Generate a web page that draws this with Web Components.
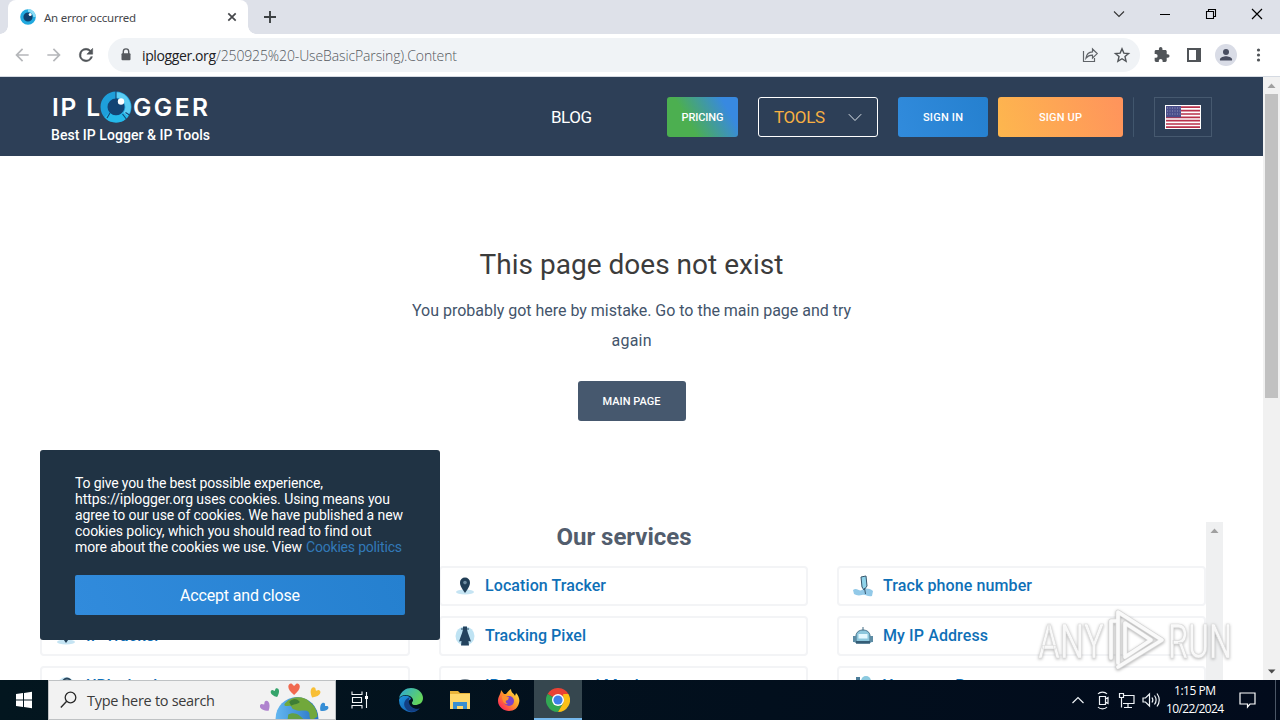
<!DOCTYPE html>
<html lang="en">
<head>
<meta charset="utf-8">
<title>An error occurred</title>
<style>
html,body{margin:0;padding:0;overflow:hidden}
body{width:1280px;height:720px;font-family:Roboto,sans-serif}
</style>
</head>
<body>
<desktop-screen></desktop-screen>

<template id="t-desktop-screen">
<style>
:host{display:flex;flex-direction:column;width:1280px;height:720px;overflow:hidden;position:relative}
.view{display:flex;flex:1;min-height:0;position:relative;background:#fff}
.page{flex:1;display:flex;flex-direction:column;overflow:hidden;background:#fff}
cookie-banner{position:absolute;left:40px;top:373px}
water-mark{position:absolute;left:1034px;top:527px}
</style>
<tab-strip></tab-strip>
<tool-bar></tool-bar>
<div class="view">
  <div class="page"><site-header></site-header><error-message></error-message><services-panel></services-panel></div>
  <scroll-bar style="--thumb:304px;--bg:#f1f1f1" class="main" down></scroll-bar>
  <cookie-banner></cookie-banner>
  <water-mark></water-mark>
</div>
<task-bar></task-bar>
</template>

<template id="t-tab-strip">
<style>
:host{display:flex;height:34px;background:#dee1e9;padding-left:8px;box-sizing:border-box;font-family:"Noto Sans",sans-serif}
.tab{width:240px;background:#fff;border-radius:8px 8px 0 0;display:flex;align-items:center;padding:0 10px 0 12px;box-sizing:border-box;position:relative}
.tab:before,.tab:after{content:"";position:absolute;bottom:0;width:8px;height:8px}
.tab:before{left:-8px;background:radial-gradient(circle at 0 0,transparent 7.5px,#fff 8px)}
.tab:after{right:-8px;background:radial-gradient(circle at 100% 0,transparent 7.5px,#fff 8px)}
.tab ui-text{margin-left:8px;font-size:11.500px;color:#45474b;flex:none}
.x{margin-left:auto}
.plus{margin:10px 0 0 15px}
.win{margin-left:auto;display:flex}
.win svg{width:46px;height:28px}
svg{display:block}
</style>
<div class="tab">
<svg width="16" height="16" viewBox="0 0 16 16"><circle cx="8" cy="8" r="6.2" fill="#10416e" stroke="#21a9df" stroke-width="3.2"/><path d="M8 1.4A6.6 6.6 0 0 1 14.6 8" fill="none" stroke="#8adcf5" stroke-width="2.6"/><circle cx="10.2" cy="5.6" r="1.5" fill="#fff"/></svg>
<ui-text w="92">An error occurred</ui-text>
<svg class="x" width="12" height="12" viewBox="0 0 12 12"><path d="M2.3 2.3l7.4 7.4M9.7 2.3l-7.4 7.4" stroke="#45474b" stroke-width="1.7"/></svg>
</div>
<svg class="plus" width="14" height="14" viewBox="0 0 14 14"><path d="M7 1v12M1 7h12" stroke="#3c4043" stroke-width="1.9"/></svg>
<div class="win">
<svg viewBox="0 0 46 28"><path d="M18.500 11.500l5 5 5-5" transform="translate(-.5)" fill="none" stroke="#333" stroke-width="1.1"/></svg>
<svg viewBox="0 0 46 28"><path d="M18 14.500h10" stroke="#000"/></svg>
<svg viewBox="0 0 46 28"><path d="M18.500 11.500h7v7h-7zM20.500 11.500v-2h7v7h-2" fill="none" stroke="#000" stroke-width="1.1"/></svg>
<svg viewBox="0 0 46 28"><path d="M18 9l10 10M28 9L18 19" stroke="#000" stroke-width="1.2"/></svg>
</div>
</template>

<template id="t-tool-bar">
<style>
:host{display:flex;align-items:center;height:43px;background:#fff;border-bottom:1px solid #d5dae2;box-sizing:border-box;padding:0 10px 0 12px;font-family:"Open Sans",sans-serif}
svg{display:block;flex:none}
.nav{display:flex;gap:12px;width:96px}
.omni{display:flex;align-items:center;width:1032px;height:34px;border-radius:17px;background:#f0f3f6;box-sizing:border-box;padding:0 8px 0 8px}
.omni ui-text{font-size:14px;font-weight:300;color:#55595e}
.lock{margin:0 6px 0 0}
.omni .d{color:#202124;font-weight:400}
.r{margin-left:auto;display:flex;gap:12px}
.ext{display:flex;gap:12px;margin-left:12px;align-items:center}
.av{width:22px;height:22px;border-radius:11px;background:#d9dce6;margin:0 -1px}
</style>
<div class="nav">
<svg width="20" height="20" viewBox="0 0 24 24" fill="#b5b7ba"><path d="M20 11H7.800l5.600-5.600L12 4l-8 8 8 8 1.400-1.400L7.800 13H20z"/></svg>
<svg width="20" height="20" viewBox="0 0 24 24" fill="#b5b7ba"><path d="M12 4l-1.400 1.400L16.200 11H4v2h12.200l-5.600 5.600L12 20l8-8z"/></svg>
<svg width="20" height="20" viewBox="0 0 24 24" fill="#505458"><path d="M17.650 6.350A7.960 7.960 0 0 0 12 4a8 8 0 1 0 7.730 10h-2.080A6 6 0 1 1 12 6c1.660 0 3.140.69 4.220 1.780L13 11h7V4z" stroke="#505458" stroke-width=".6"/></svg>
</div>
<div class="omni">
<svg class="lock" width="20" height="16" viewBox="0 0 20 16"><rect x="5.500" y="6.300" width="9" height="7" rx="1" fill="#55595e"/><path d="M7.300 7V4.600a2.700 2.700 0 0 1 5.400 0V7" fill="none" stroke="#55595e" stroke-width="1.400"/></svg>
<ui-text class="d" w="74">iplogger.org</ui-text><ui-text w="241">/250925%20-UseBasicParsing).Content</ui-text>
<div class="r">
<svg width="20" height="20" viewBox="0 0 20 20"><path d="M3.500 6v10.500h11V13M6 13.200c.6-4.200 3-6.200 6.500-6.300V4l4.700 4.600-4.700 4.500v-3c-3-.1-4.800.9-6.500 3.100z" fill="none" stroke="#5f6368" stroke-width="1.200"/></svg>
<svg width="20" height="20" viewBox="0 0 24 24"><path d="M12 4.500l2.200 5.200 5.700.5-4.300 3.700 1.300 5.600-4.900-3-4.900 3 1.300-5.600-4.300-3.700 5.700-.5z" fill="none" stroke="#505458" stroke-width="1.700"/></svg>
</div></div>
<div class="ext">
<svg width="20" height="20" viewBox="0 0 24 24" fill="#505458"><path d="M20.500 11H19V7c0-1.100-.9-2-2-2h-4V3.500a2.500 2.500 0 0 0-5 0V5H4c-1.100 0-2 .9-2 2v3.800h1.500a2.700 2.700 0 0 1 0 5.400H2V20c0 1.100.9 2 2 2h3.800v-1.500a2.700 2.700 0 0 1 5.400 0V22H17c1.100 0 2-.9 2-2v-4h1.500a2.500 2.500 0 0 0 0-5z" transform="translate(1.500 1.600) scale(.85)"/></svg>
<svg width="20" height="20" viewBox="0 0 20 20"><path d="M3 3h14v14H3z" fill="#505458"/><path d="M5 5h7v10H5z" fill="#fff"/></svg>
<svg class="av" viewBox="0 0 22 22"><circle cx="11" cy="8" r="3" fill="#484d60"/><path d="M5 16.500v-1.300c0-2 4-3 6-3s6 1 6 3v1.300z" fill="#484d60"/></svg>
<svg width="20" height="20" viewBox="0 0 20 20" fill="#505458"><circle cx="10.500" cy="5" r="1.600"/><circle cx="10.500" cy="10" r="1.600"/><circle cx="10.500" cy="15" r="1.600"/></svg>
</div>
</template>

<template id="t-scroll-bar">
<style>
:host{display:flex;flex-direction:column;width:17px;flex:none;background:var(--bg,#f1f1f1)}
svg{display:block;flex:none}
.thumb{height:var(--thumb,0);background:#c1c1c1;margin:0 2px}
.down{margin-top:auto;display:none}
:host([down]) .down{display:block}
</style>
<svg width="17" height="17" viewBox="0 0 17 17"><path d="M4.500 11L8.500 6.500 12.500 11z" fill="#a0a0a0"/></svg>
<div class="thumb"></div>
<svg class="down" width="17" height="17" viewBox="0 0 17 17"><path d="M5 6.500h7.500L8.700 10.500z" fill="#4c4c4c"/></svg>
</template>

<template id="t-site-header">
<style>
:host{display:flex;height:79px;background:#2d3f57;color:#fff;box-sizing:border-box;padding-left:51px;flex:none}
.brand{width:500px;padding-top:13px}
.logo{display:flex;height:34px;align-items:center;font:600 24.500px/34px Inter,sans-serif;padding-left:1px}
.logo ui-text{line-height:32px;margin-top:-1px}
.logo svg{margin:0 1px 0 0;flex:none}
.tag{font-size:14px;font-weight:500;line-height:16px;margin-top:3px;display:block}
.btns{display:flex;padding-top:20px;height:40px}
.btns>*{height:40px;box-sizing:border-box;border-radius:3px;display:flex;align-items:center;justify-content:center}
.blog{font-size:17px;width:41px;margin-right:75px;line-height:38px}
.s{font-size:11px;font-weight:500}
.pr{width:71px;background:linear-gradient(60deg,#4caf50 32%,#3889e0 82%);margin-right:20px}
.tools{width:120px;border:1px solid #fff;margin-right:20px;font-size:17px;color:#f7b042;padding:0 15px 0 15px;justify-content:space-between!important}
.in{width:90px;background:linear-gradient(70deg,#318bdc,#2580cf);margin-right:10px}
.up{width:125px;background:linear-gradient(70deg,#fdb74e,#ff935c);margin-right:10px}
.sep{width:1px;background:#41566d;margin-right:20px}
.flag{width:58px;border:1px solid #46596f;border-radius:0!important}
</style>
<div class="brand">
<div class="logo"><ui-text w="48">IP L</ui-text>
<svg width="32" height="34" viewBox="0 0 32 34"><circle cx="16" cy="17" r="12" fill="#134474" stroke="#1e9fda" stroke-width="7"/><path d="M16 5A12 12 0 0 1 25.500 24.300" fill="none" stroke="#5ccdf3" stroke-width="5.500"/><path d="M25.500 24.300A12 12 0 0 1 7 25" fill="none" stroke="#25b9ea" stroke-width="7"/><path d="M16 0v9M7 28l3-5M22.500 24l3.800 5M25.500 22.500l4 2.500" stroke="#134474" stroke-width="1.100"/><circle cx="21" cy="11.500" r="3.200" fill="#fff"/></svg>
<ui-text w="75">GGER</ui-text></div>
<ui-text class="tag" w="159">Best IP Logger &amp; IP Tools</ui-text>
</div>
<div class="btns">
<ui-text class="blog" w="41">BLOG</ui-text>
<div class="pr s"><ui-text w="42">PRICING</ui-text></div>
<div class="tools"><ui-text w="51">TOOLS</ui-text><svg width="14" height="9" viewBox="0 0 14 9"><path d="M.8 1.200L7 7.500l6.200-6.300" fill="none" stroke="#dfe5ea" stroke-width="1"/></svg></div>
<div class="in s"><ui-text w="40">SIGN IN</ui-text></div>
<div class="up s"><ui-text w="43">SIGN UP</ui-text></div>
<div class="sep"></div>
<div class="flag"><svg width="36" height="24" viewBox="0 0 36 24"><rect width="36" height="24" fill="#fff"/><path d="M1 2.200h34M1 5.600h34M1 9h34M1 12.300h34M1 15.700h34M1 19h34M1 22.200h34" stroke="#b8324b" stroke-width="1.700"/><path d="M1 1h15v11.300H1z" fill="#4b4f8b"/><path d="M2 3h14M2 6h14M2 9h14" stroke="#9497bd" stroke-dasharray="1 1.500"/></svg></div>
</div>
</template>

<template id="t-error-message">
<style>
:host{display:flex;flex-direction:column;align-items:center;height:366px;flex:none;color:#43546b}
h1{font-size:28px;line-height:36px;font-weight:400;margin:91px 0 13px;color:#3c3c3c}
p{margin:0;font-size:16px;line-height:30px;display:flex;flex-direction:column;align-items:center}
.b{margin-top:25px;width:108px;height:40px;border-radius:3px;background:#46586e;color:#fff;font-size:11px;font-weight:500;display:flex;align-items:center;justify-content:center}
</style>
<h1><ui-text w="304">This page does not exist</ui-text></h1>
<p><ui-text w="439">You probably got here by mistake. Go to the main page and try</ui-text><ui-text w="40">again</ui-text></p>
<div class="b"><ui-text w="58">MAIN PAGE</ui-text></div>
</template>

<template id="t-services-panel">
<style>
:host{display:flex;margin:0 40px;height:158px;overflow:hidden;flex:none}
.in{flex:1}
h2{margin:0;height:44px;line-height:30px;text-align:center;font-size:24px;font-weight:700;color:#525d6d;text-indent:1px}
.g{display:grid;grid-template-columns:370px 369px 369px;gap:10px 29px}
</style>
<div class="in"><h2><ui-text w="135">Our services</ui-text></h2>
<div class="g">
<service-card label="IP Logger" icon="pin"></service-card>
<service-card label="Location Tracker" icon="pin" w="121"></service-card>
<service-card label="Track phone number" icon="phone" w="149"></service-card>
<service-card label="IP Tracker" icon="pin" w="74"></service-card>
<service-card label="Tracking Pixel" icon="spy" w="101"></service-card>
<service-card label="My IP Address" icon="bot" w="105"></service-card>
<service-card label="URL checker" icon="ring"></service-card>
<service-card label="IP Supernet and Mask" icon="dome" w="158"></service-card>
<service-card label="Your user Browser" icon="people"></service-card>
</div></div>
<scroll-bar style="--bg:#eff0f1"></scroll-bar>
</template>

<template id="t-service-card">
<style>
:host{display:flex;align-items:center;height:40px;box-sizing:border-box;border:2px solid #f3f4f6;border-radius:4px;padding-left:14px;font-size:16px;font-weight:500;color:#0f70b7;background:#fff}
.i{width:20px;height:20px;margin:0 10px 0 0}
.i svg{display:block;overflow:visible}
ui-text{margin-top:-1px;line-height:20px}
</style>
<div class="i"></div>
</template>

<template id="t-cookie-banner">
<style>
:host{display:flex;flex-direction:column;width:400px;height:190px;box-sizing:border-box;background:#203344;border-radius:3px;padding:25px 35px;color:#fff;font-size:14px;line-height:16px}
div{display:flex;flex-direction:column;align-items:flex-start}
p{margin:0;display:flex}
.b{margin-top:20px;height:40px;border-radius:2px;background:linear-gradient(70deg,#318bdc,#2580cf);font-size:16px;align-items:center;justify-content:center;padding-top:2px;box-sizing:border-box}
.l{color:#3279b8;margin-left:4px}
</style>
<div>
<ui-text w="248">To give you the best possible experience,</ui-text>
<ui-text w="315">https://iplogger.org uses cookies. Using means you</ui-text>
<ui-text w="328">agree to our use of cookies. We have published a new</ui-text>
<ui-text w="296">cookies policy, which you should read to find out</ui-text>
<p><ui-text w="227">more about the cookies we use. View</ui-text><ui-text class="l" w="96">Cookies politics</ui-text></p>
</div>
<div class="b"><ui-text w="120">Accept and close</ui-text></div>
</template>

<template id="t-water-mark">
<style>:host{display:block}svg{display:block;filter:drop-shadow(0 1px 1.500px rgba(0,0,0,.3))}text{font:400 48px Roboto,sans-serif}</style>
<svg width="204" height="72" viewBox="0 0 204 72">
<g fill="#fff" fill-opacity=".88" stroke="#dadada" stroke-width=".7">
<text x="4" y="54" textLength="66" lengthAdjust="spacingAndGlyphs">ANY</text>
<text x="134" y="54" textLength="64" lengthAdjust="spacingAndGlyphs">RUN</text></g>
<path d="M77 54V17h5M84 59V8l44 28-44 27M91 51V19l26 17-26 17" fill="none" stroke="#d5d5d5" stroke-width="5" stroke-linejoin="round" stroke-linecap="round"/>
<path d="M77 54V17h5M84 59V8l44 28-44 27M91 51V19l26 17-26 17" fill="none" stroke="#fafafa" stroke-width="3.600" stroke-linejoin="round" stroke-linecap="round"/>
</svg>
</template>

<template id="t-task-bar">
<style>
:host{display:flex;height:40px;flex:none;background:linear-gradient(90deg,#03161f,#020f1d 60%,#020b1c);color:#fff;font-family:"Open Sans",sans-serif}
svg{display:block;flex:none}
.search{width:288px;box-sizing:border-box;height:40px;background:#f2f2f2;border:1px solid #bfc2c4;display:flex;align-items:center;color:#3b3b3b;font-size:14.500px;overflow:hidden}
.search ui-text{margin-left:10px;width:128px}
.mag{margin-left:11px}
.earth{margin-left:45px}
.a{width:48px;height:40px;display:flex;align-items:center;justify-content:center;margin-right:1px}
.on{background:#36474f;border-bottom:2px solid #76b9ed;box-sizing:border-box;padding-top:2px}
.tray{margin-left:auto;display:flex;align-items:center}
.clk{font-size:12px;line-height:18px;width:58px;margin:0 15px 0 3px;display:flex;flex-direction:column;align-items:center}
.edge{width:4px;border-left:1px solid #4b5666;height:40px;margin-left:19px}
</style>
<svg width="48" height="40" viewBox="0 0 48 40" fill="#fff"><path d="M16 14l7-1v6.600h-7zM24 12.900l8-1.100v7.800h-8zM16 20.500h7V27l-7-1zM24 20.500h8v7.700L24 27z"/></svg>
<div class="search">
<svg class="mag" width="17" height="18" viewBox="0 0 17 18"><circle cx="10.500" cy="6.500" r="5.300" fill="none" stroke="#2a2a2a" stroke-width="1.300"/><path d="M6.700 10.300L.8 16.500" stroke="#2a2a2a" stroke-width="1.400"/></svg>
<ui-text w="128">Type here to search</ui-text>
<svg class="earth" width="74" height="40" viewBox="0 0 76 40"><defs><linearGradient id="o"><stop stop-color="#63b7f0"/><stop offset="1" stop-color="#2873c5"/></linearGradient></defs>
<circle cx="38" cy="39" r="22" fill="url(#o)"/>
<path d="M26 23c6-7 19-8 25-1 5 4 8 9 8 15l-6 4c-4-4 0-8-5-10-4-1-8 1-12-1-5-1-2-4-6-4-5 1-6-1-4-3z" fill="#71a83b"/><path d="M29 35c7-4 12 1 16 5v3H28z" fill="#62a044"/><path d="M30 22c5-5 8-3 11 0-3 3-7 2-9 4z" fill="#3e7e35"/>
<defs><path id="h" d="M0 5C-8-1-5-6-2-5L0-3 2-5C5-6 8-1 0 5z"/></defs>
<use href="#h" transform="translate(35 9) scale(1.150)" fill="#f1694f"/><use href="#h" transform="translate(16 13) rotate(-22) scale(.85)" fill="#35a46b"/><use href="#h" transform="translate(56 13) rotate(30)" fill="#f8bf35"/><use href="#h" transform="translate(6 27) rotate(-35)" fill="#af83ce"/><use href="#h" transform="translate(65 28) rotate(45) scale(.85)" fill="#368ed6"/></svg>
</div>
<div class="a"><svg width="20" height="20" viewBox="0 0 20 20"><path d="M2 1.500V4.500h10V1.500M2.500 7.500h9v5h-9zM2 18.500V15.500h10V18.500M16.500 2v16" fill="none" stroke="#f2f5f7" stroke-width="1.100"/><path d="M15 6h3v3h-3z" fill="#fff"/></svg></div>
<div class="a" style="padding-left:2px"><svg width="26" height="26" viewBox="0 0 26 26"><defs><linearGradient id="e" x2="1" y2=".5"><stop stop-color="#2aa6db"/><stop offset="1" stop-color="#65d65b"/></linearGradient><linearGradient id="f" y2="1"><stop stop-color="#1d94dd"/><stop offset="1" stop-color="#1454a6"/></linearGradient></defs><path d="M1 13a12 12 0 0 0 21 8c-5 3-11 1-12-3-1-3 1-5 3-6 0-4-11-5-12 1z" fill="url(#f)"/><path d="M9 23c-5-5-3-11 3-13-3 4-1 12 9 12-3 3-8 4-12 1z" fill="#133f83"/><path d="M1 11C3 4 8 1 13 1c8 0 12 6 12 10 0 5-4 7-8 7-3 0-4-2-2-4C16 9 6 5 1 11z" fill="url(#e)"/></svg></div>
<div class="a"><svg width="24" height="24" viewBox="0 0 24 24"><path d="M2 3h8l2 2h10v16H2z" fill="#e9b43a"/><path d="M2 6h20v15H2z" fill="#ffd86b"/><path d="M5 21v-7h14v7h-4v-3H9v3z" fill="#3a8fd0"/></svg></div>
<div class="a"><svg width="24" height="24" viewBox="0 0 24 24"><defs><linearGradient id="x" x1="1" x2="0" y2="1"><stop stop-color="#fff34f"/><stop offset=".45" stop-color="#ff9d28"/><stop offset=".8" stop-color="#ff3c50"/><stop offset="1" stop-color="#e8257d"/></linearGradient></defs><path d="M1 13C1 8 4 6 4 2l3 4 2 0c1-1 2-3 5-5 0 4 3 4 4 7l1-3c3 3 4 7 3 10-1 5-5 8-10 8S1 19 1 13z" fill="url(#x)"/><circle cx="12" cy="13" r="5" fill="#7b43c9"/><path d="M5 8c3-1 4 1 7 1l-1 3c-3 0-3 3 0 4-4 1-6-4-6-8z" fill="#ff9230"/></svg></div>
<div class="a on"><svg width="24" height="24" viewBox="0 0 24 24"><path d="M12 12L1.600 6A12 12 0 0 1 22.400 6z" fill="#e94235"/><path d="M12 12L1.600 6A12 12 0 0 0 12 24l5.200-9z" fill="#32a753"/><path d="M22.400 6A12 12 0 0 1 12 24l5.200-9V6z" fill="#fbc016"/><circle cx="12" cy="12" r="6" fill="#fff"/><circle cx="12" cy="12" r="4.600" fill="#3d7fea"/></svg></div>
<div class="tray">
<svg width="92" height="24" viewBox="0 0 92 24" fill="none" stroke="#eef2f6" stroke-width="1.200"><path d="M1.500 15L7 9.500 12.500 15M28.500 8.500h6v8h-6zM34.500 11l2.500-1.500v6L34.500 14M27 6c2-2.500 7-2.500 9 0M27 19c2 2.500 7 2.500 9 0"/><path d="M52 7.500h11v8H52M57 15.500v4M53 19.500h8M48.500 5.500h4v4h-4zM50.500 9.500v10"/><path d="M72 10h2.500l4-4v12l-4-4H72zM81 9.500q1.700 2.500 0 5M83.500 7.500q3.200 4.500 0 9M86 5.500q4.500 6.500 0 13"/></svg>
<div class="clk"><ui-text w="42">1:15 PM</ui-text><ui-text w="58">10/22/2024</ui-text></div>
<svg width="17" height="18" viewBox="0 0 17 18"><path d="M1 2h15v11h-5l-2.500 3v-3H1z" fill="none" stroke="#fff" stroke-width="1.200"/></svg>
<div class="edge"></div>
</div>
</template>

<script>
const icons={
pin:'<ellipse cx="10" cy="16" rx="9" ry="2.600" fill="#c5e4f3"/><path d="M10 17C6.500 12 5 9.500 5 6.500a5 5 0 0 1 10 0c0 3-1.500 5.500-5 10.500z" fill="#213e56"/><circle cx="10" cy="6.600" r="1.800" fill="#6d8ba0"/>',
phone:'<path d="M0 14c4-3 6 2 9 0s7-2 11 1l-1 5c-5 1-6-2-10-1S3 19 1 18z" fill="#92c9e8"/><path d="M8 1l5-1 1 10-3 4-2-3z" fill="#8fd3ea" stroke="#36566d"/><path d="M11.500 12l1 6" stroke="#36566d"/>',
spy:'<ellipse cx="10" cy="10" rx="9.500" ry="9.500" fill="#bfe3f3"/><path d="M8 .5h4v2h2v1h-2l.8 3 3.200 9-2.500-.5.500 4.500H6l.5-4.500L4 15.500l3.200-9 .8-3H6v-1h2z" fill="#24435e"/>',
bot:'<ellipse cx="10" cy="15" rx="10" ry="3" fill="#bfe0ee"/><path d="M3 10c0-8 14-8 14 0v7H3z" fill="#8dc7dd" stroke="#426c84"/><path d="M0 10h3v6H0zM17 10h3v6h-3z" fill="#5d8ca4"/><path d="M5.500 8h9v4.500h-9z" fill="#e4f8ff"/><path d="M3 15h14v2.500H3z" fill="#355d76"/><path d="M10 1v3" stroke="#426c84"/>',
ring:'<circle cx="10" cy="10" r="9" fill="#c5e4f3"/><circle cx="11" cy="7" r="4.500" fill="#a7c8da" stroke="#2b465c" stroke-width="1.800"/>',
dome:'<path d="M2 9c0-8 16-8 16 0z" fill="#7c8b96"/>',
people:'<path d="M3 1h4v8H3z" fill="#4b7c99"/><circle cx="13" cy="5" r="5" fill="#8bc9df"/>'
};
const define=(name,setup)=>customElements.define(name,class extends HTMLElement{
  constructor(){super();this.attachShadow({mode:'open'}).append(document.getElementById('t-'+name).content.cloneNode(true));}
  connectedCallback(){if(setup)setup(this);}
});
define('service-card',el=>{
  const r=el.shadowRoot;
  r.querySelector('.i').innerHTML='<svg width="20" height="20" viewBox="0 0 20 20">'+icons[el.getAttribute('icon')]+'</svg>';
  const t=document.createElement('ui-text');
  t.textContent=el.getAttribute('label');
  if(el.getAttribute('w'))t.setAttribute('w',el.getAttribute('w'));
  r.append(t);
});
['tab-strip','tool-bar','scroll-bar','site-header','error-message','services-panel','cookie-banner','water-mark','task-bar','desktop-screen'].forEach(n=>define(n));
// Single line of text whose tracking is adjusted to the width in its "w" attribute.
customElements.define('ui-text',class extends HTMLElement{
  constructor(){super();this.attachShadow({mode:'open'}).innerHTML='<style>:host{display:inline-block;white-space:pre;flex:none}</style><span><slot></slot></span>';}
  connectedCallback(){
    const w=+this.getAttribute('w');if(!w)return;
    const s=this.shadowRoot.querySelector('span'),n=this.textContent.length;
    const k=(w-s.getBoundingClientRect().width)/(n-1);
    s.style.letterSpacing=k+'px';s.style.marginRight=-k+'px';
  }
});
</script>
</body>
</html>
